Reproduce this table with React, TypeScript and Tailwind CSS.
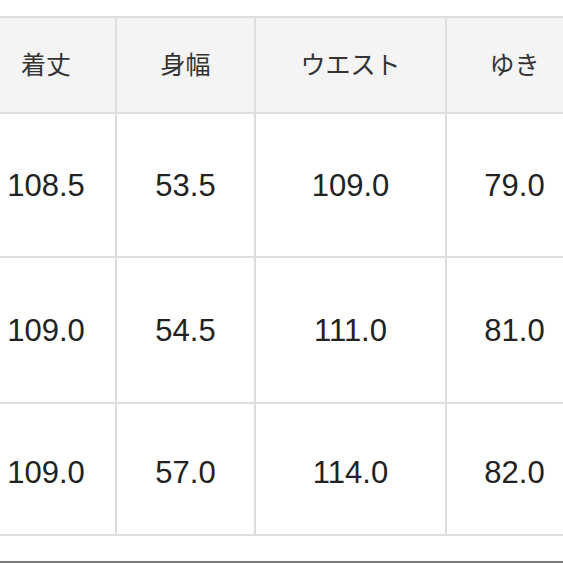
import React from "react";

const headers = ["着丈", "身幅", "ウエスト", "ゆき"];
const rows = [
  ["108.5", "53.5", "109.0", "79.0"],
  ["109.0", "54.5", "111.0", "81.0"],
  ["109.0", "57.0", "114.0", "82.0"],
];
const rowHeights = ["h-[142px] pt-[2px]", "h-[144px] pt-[2px]", "h-[130px] pt-[8px]"];

export default function App() {
  return (
    <div className="w-[563px] h-[563px] overflow-hidden bg-white flex flex-col">
      <div className="h-[16px] shrink-0" />
      <div className="ml-[-25px] w-[611px] shrink-0 grid grid-cols-[138px_137px_189px_135px] gap-[2px] p-[2px] bg-[#dedede]">
        {headers.map((h) => (
          <div
            key={h}
            className="h-[94px] bg-[#f4f4f5] flex items-center justify-center text-[25px] text-[#333] pb-[2px]"
            style={{ fontFamily: '"Noto Sans CJK JP", "Noto Sans", sans-serif' }}
          >
            {h}
          </div>
        ))}
        {rows.map((r, i) =>
          r.map((v, j) => (
            <div
              key={`${i}-${j}`}
              className={`${rowHeights[i]} bg-white flex items-center justify-center text-[31px] text-[#222]`}
              style={{ fontFamily: '"Liberation Sans", Arial, sans-serif' }}
            >
              {v}
            </div>
          ))
        )}
      </div>
      <div className="flex-1" />
      <div className="h-[2px] bg-[#7a7a7a] shrink-0" />
    </div>
  );
}
